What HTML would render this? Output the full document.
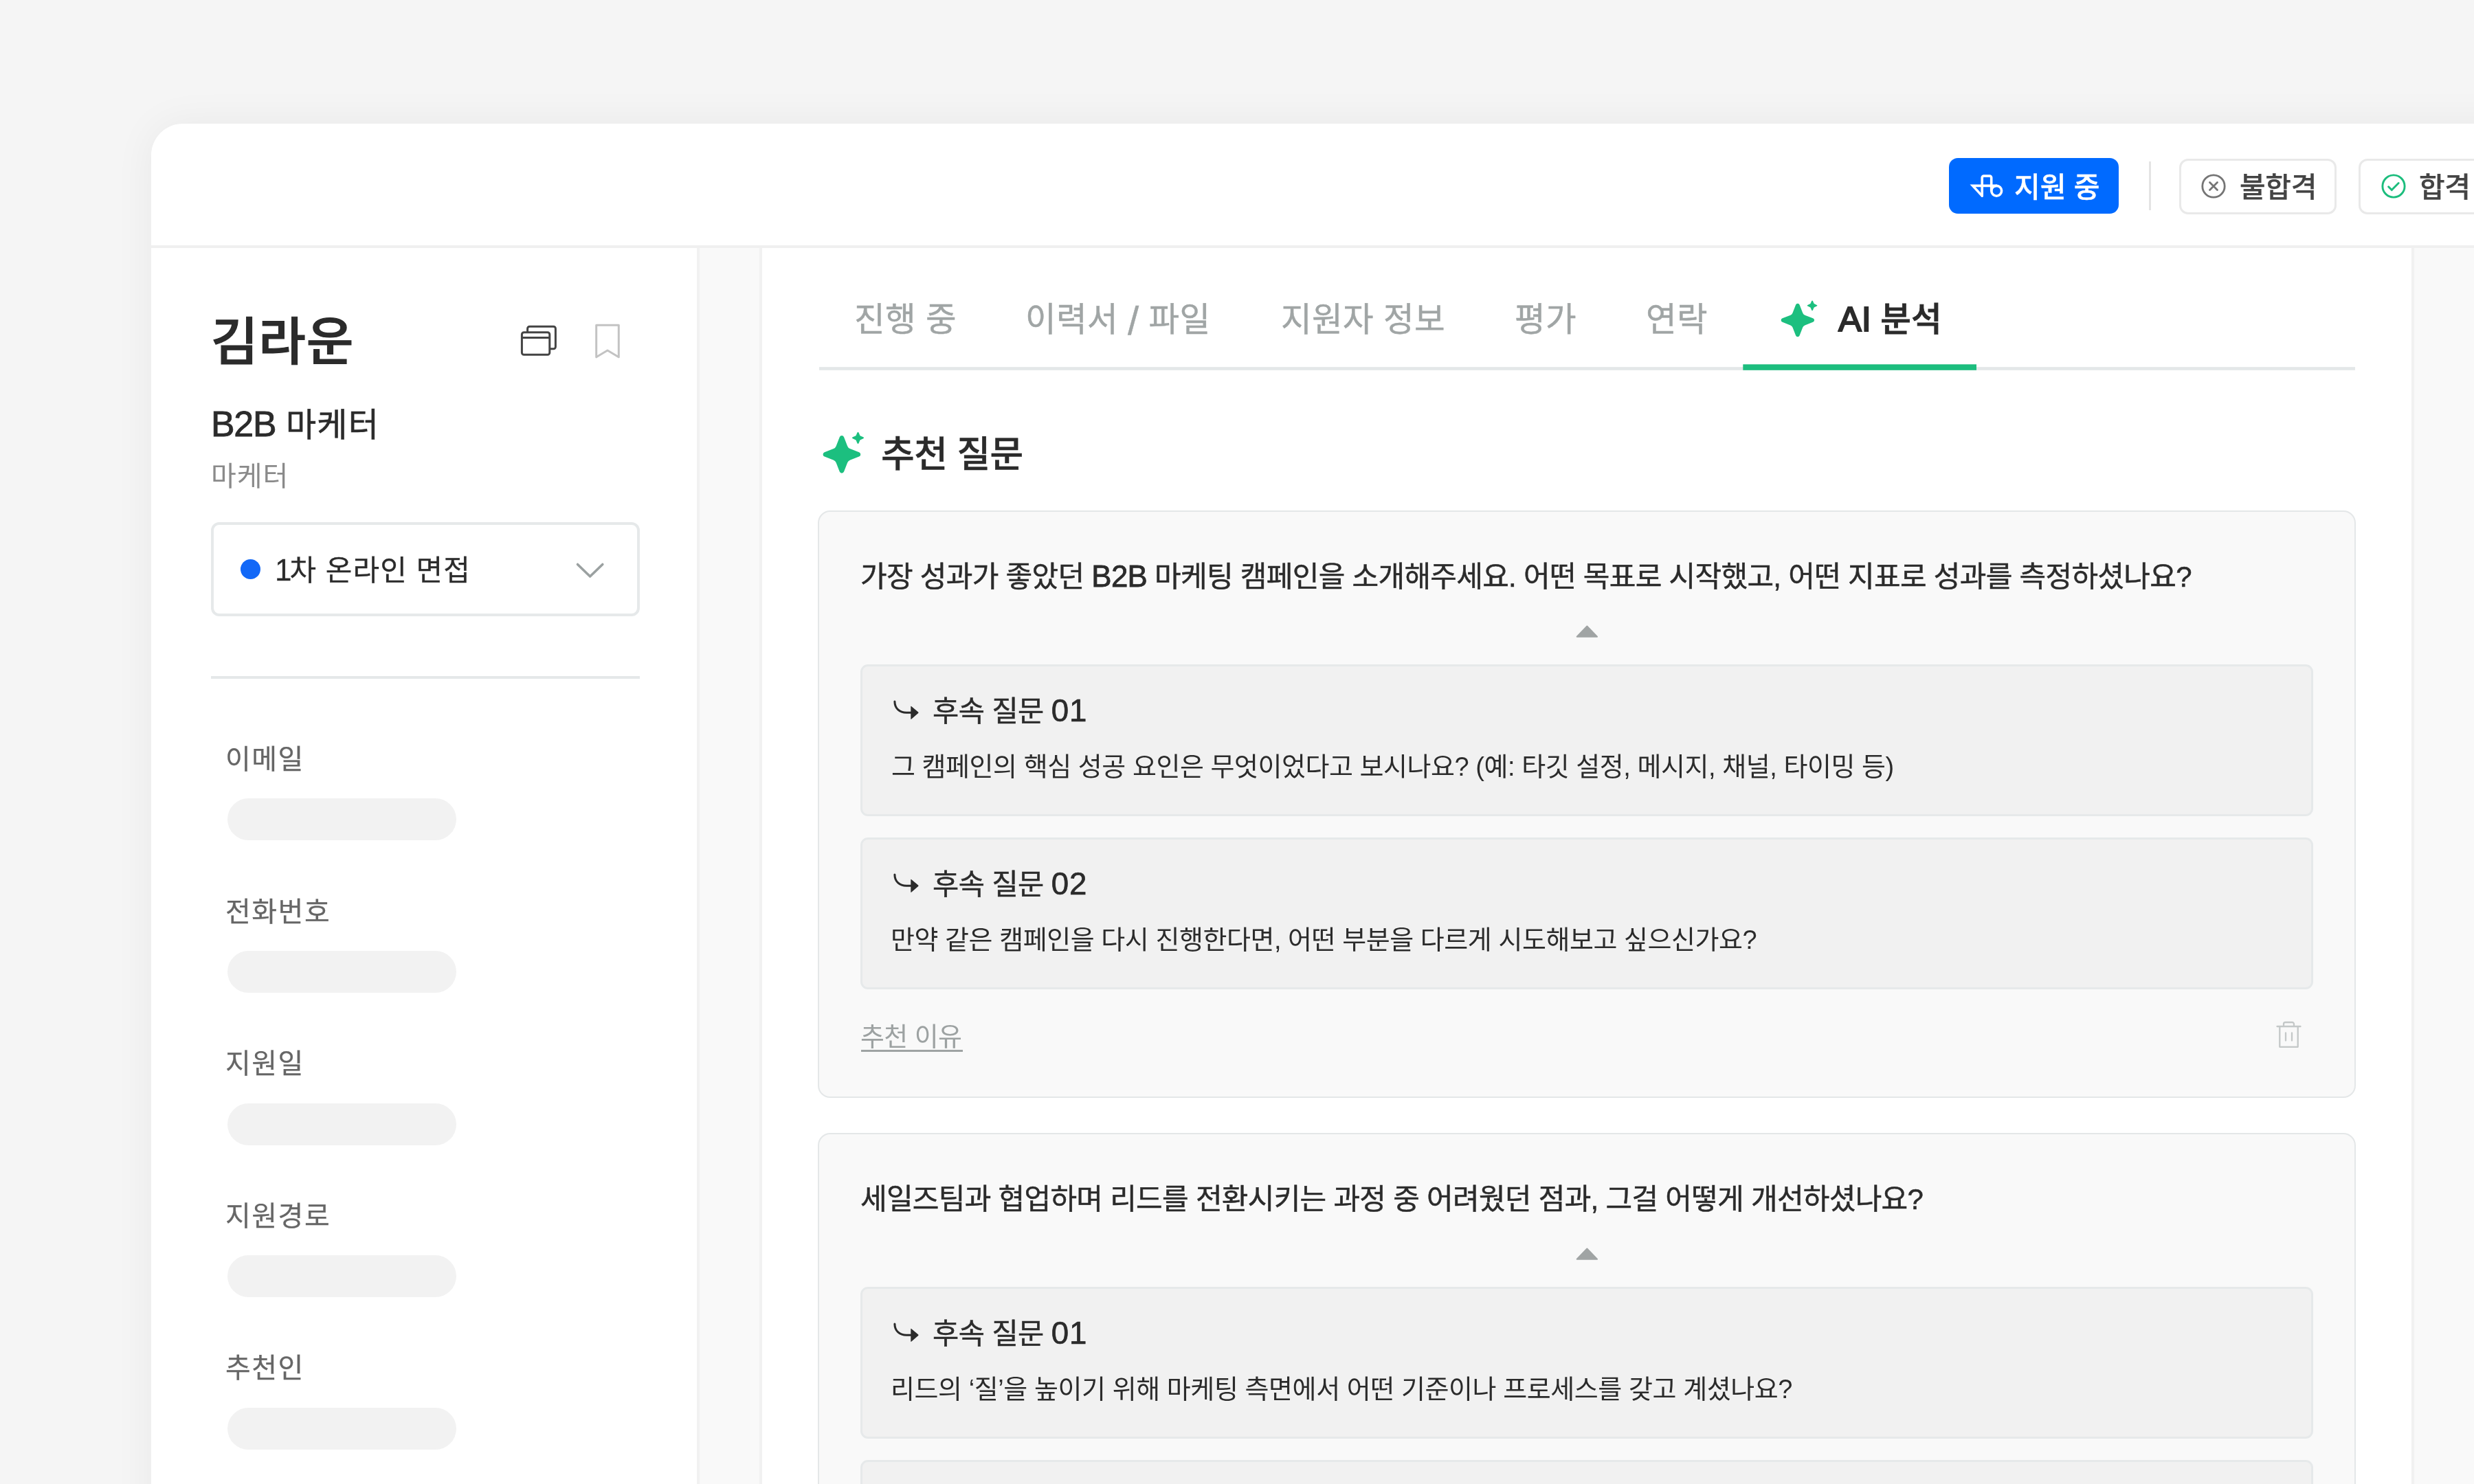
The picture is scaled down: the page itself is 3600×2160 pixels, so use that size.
<!DOCTYPE html>
<html lang="ko">
<head>
<meta charset="utf-8">
<title>AI 분석 - 추천 질문</title>
<style>
*{box-sizing:border-box;margin:0;padding:0}
html,body{width:3600px;height:2160px;overflow:hidden;background:#f5f5f5}
body{position:relative;font-family:"Liberation Sans","Noto Sans CJK KR",sans-serif;color:#2b2b2b}
.abs{position:absolute}
.t{position:absolute;white-space:nowrap;line-height:1;will-change:transform}
#app{left:220px;top:180px;width:3500px;height:2100px;background:#fff;border-top-left-radius:46px;box-shadow:0 0 60px rgba(0,0,0,.055)}
#hdrline{left:220px;top:357px;width:3380px;height:4px;background:#f0f0f0}
#sideline{left:1014px;top:361px;width:4px;height:1800px;background:#f1f1f1}
#gap{left:1018px;top:361px;width:87px;height:1800px;background:#f9f9f9}
#mainl{left:1105px;top:361px;width:4px;height:1800px;background:#f1f1f1}
#mainr{left:3509px;top:361px;width:4px;height:1800px;background:#f1f1f1}
#rgap{left:3513px;top:361px;width:87px;height:1800px;background:#f9f9f9}
/* header */
#btnblue{left:2836px;top:230px;width:247px;height:81px;background:#006aff;border-radius:13px}
#btnblue_t{left:2930.5px;top:252.5px;font-size:41px;font-weight:500;-webkit-text-stroke:.4px;color:#fff}
#hdiv{left:3127px;top:235px;width:3px;height:71px;background:#e4e4e4}
.obtn{border:3px solid #e9e9e9;border-radius:13px;background:#fff;height:81px;top:231px}
#btnfail{left:3171px;width:229px}
#btnpass{left:3432px;width:200px}
#fail_t{left:3258.5px;top:253px;font-size:41px;font-weight:500;-webkit-text-stroke:.25px;color:#444;letter-spacing:-.4px}
#pass_t{left:3520px;top:253px;font-size:41px;font-weight:500;-webkit-text-stroke:.25px;color:#444;letter-spacing:-.4px}
/* sidebar */
#name{left:307px;top:462.3px;font-size:74.5px;font-weight:500;-webkit-text-stroke:1.2px;color:#2b2b2b;letter-spacing:.8px}
#job .L{-webkit-text-stroke:.9px;font-size:1.08em;letter-spacing:-1.2px}
#job{left:307.3px;top:595px;font-size:48px;font-weight:400;-webkit-text-stroke:.6px;color:#2b2b2b;letter-spacing:1.2px}
.L{font-size:1.045em;line-height:0}
#jobsub{left:307px;top:673px;font-size:40px;font-weight:400;color:#8a8a8a;letter-spacing:1px}
#sel{left:307px;top:760px;width:624px;height:137px;border:4px solid #e6e9ea;border-radius:12px;background:#fff}
#seldot{left:350.3px;top:813.6px;width:29px;height:29px;border-radius:50%;background:#1268f7}
#sel_t{left:399.8px;top:809.6px;font-size:42px;font-weight:400;-webkit-text-stroke:.3px;color:#2b2b2b;letter-spacing:1.05px}
#sdiv{left:307px;top:984px;width:624px;height:4px;background:#e5e8e9}
.lbl{left:328px;font-size:40px;font-weight:400;-webkit-text-stroke:.25px;color:#666;letter-spacing:1.5px}
.sk{left:331px;width:333px;height:61px;border-radius:31px;background:#f2f2f2}
/* main */
.tab{top:441.3px;font-size:48.5px;font-weight:400;-webkit-text-stroke:.45px;color:#a0a5a5;letter-spacing:.4px}
#tab6{top:441.3px;font-size:48.5px;font-weight:500;-webkit-text-stroke:.8px;color:#2b2b2b}
#tab6 .L{-webkit-text-stroke:2px}
#h2{left:1282px;top:634.5px;font-size:53px;font-weight:500;-webkit-text-stroke:.4px;color:#2b2b2b;letter-spacing:-.6px}
.card{left:1190px;width:2238px;height:855px;background:#f9f9f9;border:2px solid #e4e7e8;border-radius:18px}
.q{left:1252.2px;font-size:42px;font-weight:400;-webkit-text-stroke:.5px;color:#2b2b2b;letter-spacing:-0.63px}
.q .L{-webkit-text-stroke:.8px}
.box{left:1252px;width:2114px;height:221px;background:#f1f1f1;border:3px solid #e6e9ea;border-radius:11px}
.bt{left:1357px;font-size:41.5px;font-weight:400;-webkit-text-stroke:.5px;color:#2b2b2b;letter-spacing:-0.5px}
.bt .L{font-size:1.1em;-webkit-text-stroke:.7px;letter-spacing:.9px}
.bq{left:1297px;font-size:38px;font-weight:400;color:#2b2b2b;letter-spacing:-0.44px}
.why{left:1251.8px;font-size:38px;font-weight:400;color:#9da2a2;letter-spacing:-0.6px}
.whyu{left:1252.5px;width:148.5px;height:3px;background:#9ea3a3}
</style>
</head>
<body>
<div id="app" class="abs"></div>
<div id="hdrline" class="abs"></div>
<div id="sideline" class="abs"></div>
<div id="gap" class="abs"></div>
<div id="mainl" class="abs"></div>
<div id="mainr" class="abs"></div>
<div id="rgap" class="abs"></div>

<div id="btnblue" class="abs"></div>
<svg class="abs" style="left:2860px;top:248px" width="60" height="48" viewBox="2860 248 60 48" fill="none" stroke="#fff" stroke-width="3.6" stroke-linejoin="round" stroke-linecap="round">
<path d="M2884.2 285.1V258.6a2.5 2.5 0 0 1 2.5-2.5h8.5a2.5 2.5 0 0 1 2.5 2.5V277.6"/>
<path d="M2884.2 285.1L2870.6 270.4H2905.2" stroke-linejoin="miter"/>
<circle cx="2905.2" cy="277.8" r="7.4"/>
</svg>
<div id="btnblue_t" class="t">지원 중</div>
<div id="hdiv" class="abs"></div>
<div id="btnfail" class="abs obtn"></div>
<svg class="abs" style="left:3200.4px;top:250.2px" width="42" height="42" viewBox="0 0 42 42" fill="none" stroke="#757575" stroke-width="2.8" stroke-linecap="round">
<circle cx="21" cy="21" r="16.2"/><path d="M15.5 15.5L26.5 26.5M26.5 15.5L15.5 26.5"/>
</svg>
<div id="fail_t" class="t">불합격</div>
<div id="btnpass" class="abs obtn"></div>
<svg class="abs" style="left:3461.6px;top:250.3px" width="42" height="42" viewBox="0 0 42 42" fill="none" stroke="#1cbd7d" stroke-width="2.9" stroke-linecap="round" stroke-linejoin="round">
<circle cx="21" cy="21" r="16.1"/><path d="M13.6 21.8L18.3 26.6L28.2 16.6"/>
</svg>
<div id="pass_t" class="t">합격</div>

<div id="name" class="t">김라운</div>
<svg class="abs" style="left:750px;top:465px" width="70" height="60" viewBox="750 465 70 60" fill="none" stroke="#444" stroke-width="3" stroke-linejoin="round">
<path d="M767.6 483.7V478.3a3 3 0 0 1 3-3h34.8a3 3 0 0 1 3 3v26.5a3 3 0 0 1-3 3H799.8"/>
<rect x="759.4" y="483.7" width="40.4" height="32.5" rx="3"/>
<path d="M759.4 491.4H799.8"/>
</svg>
<svg class="abs" style="left:860px;top:465px" width="50" height="62" viewBox="860 465 50 62" fill="none" stroke="#c3c3c3" stroke-width="3" stroke-linejoin="round">
<path d="M867.7 473.3H900.3V519.8L884 510L867.7 519.8Z"/>
</svg>
<div id="job" class="t"><span class="L" id="jobL">B2B</span> 마케터</div>
<div id="jobsub" class="t">마케터</div>
<div id="sel" class="abs"></div>
<div id="seldot" class="abs"></div>
<div id="sel_t" class="t"><span class="L" style="letter-spacing:-3px">1</span>차 온라인 면접</div>
<svg class="abs" style="left:830px;top:810px" width="60" height="40" viewBox="830 810 60 40" fill="none" stroke="#9ba1a1" stroke-width="3.6" stroke-linecap="round" stroke-linejoin="round">
<path d="M840.5 821.5L858.6 839L876.8 821.5"/>
</svg>
<div id="sdiv" class="abs"></div>
<div class="t lbl" id="l1" style="top:1085.0px">이메일</div><div class="abs sk" style="top:1162.3px"></div>
<div class="t lbl" id="l2" style="top:1306.6px">전화번호</div><div class="abs sk" style="top:1383.9px"></div>
<div class="t lbl" id="l3" style="top:1528.2px">지원일</div><div class="abs sk" style="top:1605.5px"></div>
<div class="t lbl" id="l4" style="top:1749.8px">지원경로</div><div class="abs sk" style="top:1827.1px"></div>
<div class="t lbl" id="l5" style="top:1971.4px">추천인</div><div class="abs sk" style="top:2048.7px"></div>

<svg class="abs" style="left:1190px;top:528px" width="2240" height="12" viewBox="1190 528 2240 12"><rect x="1192" y="534.2" width="2235" height="4.6" fill="#e3e7e8"/><rect x="2536.3" y="530.3" width="339.7" height="8.5" fill="#1cbd7e"/></svg>
<div id="tab1" class="t tab" style="left:1243px">진행 중</div>
<div id="tab2" class="t tab" style="left:1492px">이력서 <span class="L" style="font-size:1.2em;position:relative;top:5.4px">/</span> 파일</div>
<div id="tab3" class="t tab" style="left:1864px">지원자 정보</div>
<div id="tab4" class="t tab" style="left:2204px">평가</div>
<div id="tab5" class="t tab" style="left:2395px">연락</div>
<svg class="abs" style="left:2589px;top:435px" width="58" height="58" viewBox="0 0 58 58" fill="#1cbf7f"><path d="M24.05 8.77A3.00 3.00 0 0 1 29.65 8.77L34.21 20.56Q35.08 22.82 37.34 23.69L49.13 28.25A3.00 3.00 0 0 1 49.13 33.85L37.34 38.41Q35.08 39.28 34.21 41.54L29.65 53.33A3.00 3.00 0 0 1 24.05 53.33L19.49 41.54Q18.62 39.28 16.36 38.41L4.57 33.85A3.00 3.00 0 0 1 4.57 28.25L16.36 23.69Q18.62 22.82 19.49 20.56Z"/><path d="M47.18 3.07A0.94 0.94 0 0 1 48.92 3.07L50.43 6.61Q50.66 7.14 51.19 7.37L54.73 8.88A0.94 0.94 0 0 1 54.73 10.62L51.19 12.13Q50.66 12.36 50.43 12.89L48.92 16.43A0.94 0.94 0 0 1 47.18 16.43L45.67 12.89Q45.44 12.36 44.91 12.13L41.37 10.62A0.94 0.94 0 0 1 41.37 8.88L44.91 7.37Q45.44 7.14 45.67 6.61Z"/></svg>
<div id="tab6" class="t" style="left:2674.7px"><span class="L">AI</span> 분석</div>
<svg class="abs" style="left:1195px;top:626px" width="64" height="65" viewBox="0 0 64 65" fill="#1cbf7f"><path d="M26.74 10.22A3.39 3.39 0 0 1 33.06 10.22L38.21 23.55Q39.20 26.10 41.75 27.09L55.08 32.24A3.39 3.39 0 0 1 55.08 38.56L41.75 43.71Q39.20 44.70 38.21 47.25L33.06 60.58A3.39 3.39 0 0 1 26.74 60.58L21.59 47.25Q20.60 44.70 18.05 43.71L4.72 38.56A3.39 3.39 0 0 1 4.72 32.24L18.05 27.09Q20.60 26.10 21.59 23.55Z"/><path d="M52.49 3.54A1.10 1.10 0 0 1 54.51 3.54L56.28 7.68Q56.55 8.30 57.17 8.57L61.31 10.34A1.10 1.10 0 0 1 61.31 12.36L57.17 14.13Q56.55 14.40 56.28 15.02L54.51 19.16A1.10 1.10 0 0 1 52.49 19.16L50.72 15.02Q50.45 14.40 49.83 14.13L45.69 12.36A1.10 1.10 0 0 1 45.69 10.34L49.83 8.57Q50.45 8.30 50.72 7.68Z"/></svg>
<div id="h2" class="t">추천 질문</div>
<div class="abs card" style="top:743px"></div>
<div class="t q" id="c1q" style="top:818.6px;letter-spacing:-0.71px">가장 성과가 좋았던 <span class="L">B2B</span> 마케팅 캠페인을 소개해주세요. 어떤 목표로 시작했고, 어떤 지표로 성과를 측정하셨나요?</div>
<svg class="abs" style="left:2290px;top:906px" width="40" height="26" viewBox="2290 906 40 26" fill="#a0a4a4" stroke="#a0a4a4" stroke-width="2" stroke-linejoin="round"><path d="M2309.35 911.5L2324 926.8H2294.7Z"/></svg>
<div class="abs box" style="top:967px"></div>
<svg class="abs" style="left:1296px;top:1014px" width="44" height="36" viewBox="1296 1014 44 36"><path d="M1301.9 1020.9C1301.9 1031 1309 1037.3 1319 1037.3H1326" fill="none" stroke="#2b2b2b" stroke-width="3" stroke-linecap="round"/><path d="M1325.3 1028.6V1046.2Q1325.3 1047.6 1326.4 1046.6L1336.2 1038Q1336.9 1037.3 1336.2 1036.6L1326.4 1028.2Q1325.3 1027.2 1325.3 1028.6Z" fill="#2b2b2b"/></svg>
<div class="t bt" id="c1b0t" style="top:1015.0px">후속 질문 <span class="L">01</span></div>
<div class="t bq" id="c1b0q" style="top:1097.0px;letter-spacing:-0.46px;left:1297px">그 캠페인의 핵심 성공 요인은 무엇이었다고 보시나요? (예: 타깃 설정, 메시지, 채널, 타이밍 등)</div>
<div class="abs box" style="top:1219px"></div>
<svg class="abs" style="left:1296px;top:1266px" width="44" height="36" viewBox="1296 1014 44 36"><path d="M1301.9 1020.9C1301.9 1031 1309 1037.3 1319 1037.3H1326" fill="none" stroke="#2b2b2b" stroke-width="3" stroke-linecap="round"/><path d="M1325.3 1028.6V1046.2Q1325.3 1047.6 1326.4 1046.6L1336.2 1038Q1336.9 1037.3 1336.2 1036.6L1326.4 1028.2Q1325.3 1027.2 1325.3 1028.6Z" fill="#2b2b2b"/></svg>
<div class="t bt" id="c1b1t" style="top:1267.0px">후속 질문 <span class="L">02</span></div>
<div class="t bq" id="c1b1q" style="top:1349.0px;letter-spacing:-0.46px;left:1295.8px">만약 같은 캠페인을 다시 진행한다면, 어떤 부분을 다르게 시도해보고 싶으신가요?</div>
<div class="t why" id="c1why" style="top:1489.6px">추천 이유</div>
<div class="abs whyu" style="top:1528px"></div>
<svg class="abs" style="left:3308px;top:1483px" width="46" height="46" viewBox="3308 1483 46 46" fill="none" stroke="#c4c8c8" stroke-width="2.3" stroke-linejoin="round" stroke-linecap="round"><path d="M3313.5 1494H3347.5"/><path d="M3323 1493.5V1490.5a2.5 2.5 0 0 1 2.5-2.5h10a2.5 2.5 0 0 1 2.5 2.5V1493.5"/><path d="M3317.3 1494.5V1523.8H3343.7V1494.5"/><path d="M3326 1503.5V1514.5M3335 1503.5V1514.5"/></svg>
<div class="abs card" style="top:1649px"></div>
<div class="t q" id="c2q" style="top:1724.6px;letter-spacing:-0.72px">세일즈팀과 협업하며 리드를 전환시키는 과정 중 어려웠던 점과, 그걸 어떻게 개선하셨나요?</div>
<svg class="abs" style="left:2290px;top:1812px" width="40" height="26" viewBox="2290 906 40 26" fill="#a0a4a4" stroke="#a0a4a4" stroke-width="2" stroke-linejoin="round"><path d="M2309.35 911.5L2324 926.8H2294.7Z"/></svg>
<div class="abs box" style="top:1873px"></div>
<svg class="abs" style="left:1296px;top:1920px" width="44" height="36" viewBox="1296 1014 44 36"><path d="M1301.9 1020.9C1301.9 1031 1309 1037.3 1319 1037.3H1326" fill="none" stroke="#2b2b2b" stroke-width="3" stroke-linecap="round"/><path d="M1325.3 1028.6V1046.2Q1325.3 1047.6 1326.4 1046.6L1336.2 1038Q1336.9 1037.3 1336.2 1036.6L1326.4 1028.2Q1325.3 1027.2 1325.3 1028.6Z" fill="#2b2b2b"/></svg>
<div class="t bt" id="c2b0t" style="top:1921.0px">후속 질문 <span class="L">01</span></div>
<div class="t bq" id="c2b0q" style="top:2003.0px;letter-spacing:-0.43px;left:1296.4px">리드의 ‘질’을 높이기 위해 마케팅 측면에서 어떤 기준이나 프로세스를 갖고 계셨나요?</div>
<div class="abs box" style="top:2125px"></div>
<svg class="abs" style="left:1296px;top:2172px" width="44" height="36" viewBox="1296 1014 44 36"><path d="M1301.9 1020.9C1301.9 1031 1309 1037.3 1319 1037.3H1326" fill="none" stroke="#2b2b2b" stroke-width="3" stroke-linecap="round"/><path d="M1325.3 1028.6V1046.2Q1325.3 1047.6 1326.4 1046.6L1336.2 1038Q1336.9 1037.3 1336.2 1036.6L1326.4 1028.2Q1325.3 1027.2 1325.3 1028.6Z" fill="#2b2b2b"/></svg>
<div class="t bt" id="c2b1t" style="top:2173.0px">후속 질문 <span class="L">02</span></div>
<div class="t bq" id="c2b1q" style="top:2255.0px;letter-spacing:-0.43px;left:1297px">세일즈팀과의 커뮤니케이션에서 가장 중요하게 생각하는 원칙은 무엇인가요?</div>
<div class="t why" id="c2why" style="top:2395.6px">추천 이유</div>
<div class="abs whyu" style="top:2434px"></div>
<svg class="abs" style="left:3308px;top:2389px" width="46" height="46" viewBox="3308 1483 46 46" fill="none" stroke="#c4c8c8" stroke-width="2.3" stroke-linejoin="round" stroke-linecap="round"><path d="M3313.5 1494H3347.5"/><path d="M3323 1493.5V1490.5a2.5 2.5 0 0 1 2.5-2.5h10a2.5 2.5 0 0 1 2.5 2.5V1493.5"/><path d="M3317.3 1494.5V1523.8H3343.7V1494.5"/><path d="M3326 1503.5V1514.5M3335 1503.5V1514.5"/></svg>
</body>
</html>
